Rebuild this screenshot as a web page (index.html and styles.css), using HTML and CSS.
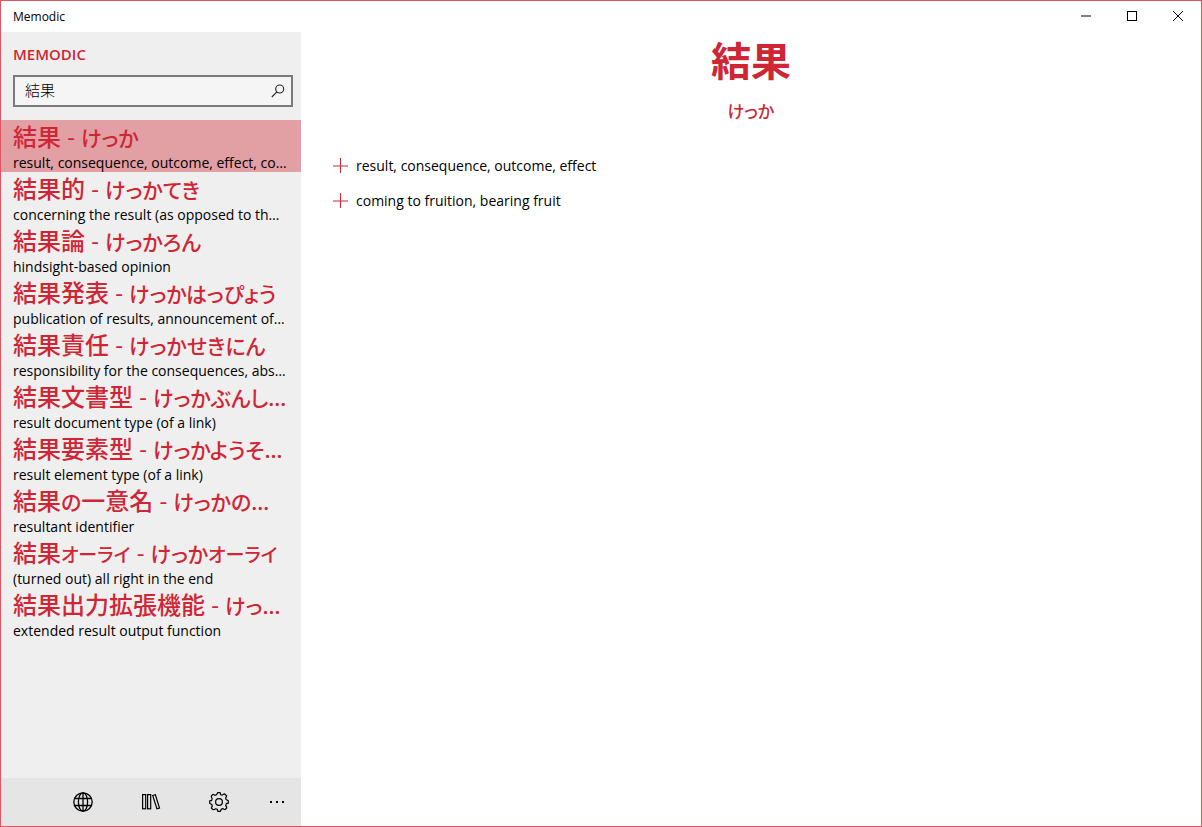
FILE: index.html
```html
<!DOCTYPE html>
<html lang="en">
<head>
<meta charset="utf-8">
<meta name="viewport" content="width=device-width, initial-scale=1">
<title>Memodic</title>
<link rel="stylesheet" href="styles.css">
</head>
<body>
<div class="window">
  <header class="titlebar">
    <span class="titlebar-name">Memodic</span>
    <div class="caption-buttons">
      <button type="button" class="caption-button" aria-label="Minimize"><svg width="10" height="10" viewBox="0 0 10 10"><path d="M0 5H10" stroke="#000" stroke-width="1" fill="none"/></svg></button>
      <button type="button" class="caption-button" aria-label="Maximize"><svg width="10" height="10" viewBox="0 0 10 10"><rect x=".5" y=".5" width="9" height="9" stroke="#000" fill="none"/></svg></button>
      <button type="button" class="caption-button" aria-label="Close"><svg width="10" height="10" viewBox="0 0 10 10"><path d="M0 0L10 10M10 0L0 10" stroke="#000" fill="none"/></svg></button>
    </div>
  </header>
  <div class="body">
    <aside class="sidebar">
      <h2 class="brand">MEMODIC</h2>
      <form class="search">
        <input class="search-input" type="text" value="結果" aria-label="Search">
        <button type="button" class="search-button" aria-label="Submit search"><svg width="14" height="14" viewBox="0 0 14 14" fill="none" stroke="#222" stroke-width="1.1"><circle cx="8.7" cy="5" r="4"/><path d="M5.9 7.9L.8 13"/></svg></button>
      </form>
      <ul class="results">
        <li><a href="#" class="result result-selected"><span class="word" lang="ja">結果 - <span class="hiragana">けっか</span></span><span class="gloss">result, consequence, outcome, effect, co…</span></a></li>
        <li><a href="#" class="result"><span class="word" lang="ja">結果的 - <span class="hiragana">けっかてき</span></span><span class="gloss">concerning the result (as opposed to th…</span></a></li>
        <li><a href="#" class="result"><span class="word" lang="ja">結果論 - <span class="hiragana">けっかろん</span></span><span class="gloss">hindsight-based opinion</span></a></li>
        <li><a href="#" class="result"><span class="word" lang="ja">結果発表 - <span class="hiragana">けっかはっぴょう</span></span><span class="gloss">publication of results, announcement of…</span></a></li>
        <li><a href="#" class="result"><span class="word" lang="ja">結果責任 - <span class="hiragana">けっかせきにん</span></span><span class="gloss">responsibility for the consequences, abs…</span></a></li>
        <li><a href="#" class="result"><span class="word" lang="ja">結果文書型 - <span class="hiragana">けっかぶんし</span><span class="more">…</span></span><span class="gloss">result document type (of a link)</span></a></li>
        <li><a href="#" class="result"><span class="word" lang="ja">結果要素型 - <span class="hiragana">けっかようそ</span><span class="more">…</span></span><span class="gloss">result element type (of a link)</span></a></li>
        <li><a href="#" class="result"><span class="word" lang="ja">結果<span class="hiragana">の</span>一意名 - <span class="hiragana">けっかの</span><span class="more">…</span></span><span class="gloss">resultant identifier</span></a></li>
        <li><a href="#" class="result"><span class="word" lang="ja">結果<span class="katakana">オーライ</span> - <span class="hiragana">けっか</span><span class="katakana">オーライ</span></span><span class="gloss">(turned out) all right in the end</span></a></li>
        <li><a href="#" class="result"><span class="word" lang="ja">結果出力拡張機能 - <span class="hiragana">けっ</span><span class="more">…</span></span><span class="gloss">extended result output function</span></a></li>
      </ul>
      <nav class="commands" aria-label="Commands">
        <button type="button" class="command" aria-label="Language"><svg width="20" height="20" viewBox="0 0 20 20" fill="none" stroke="#000" stroke-width="1.3"><circle cx="10" cy="10" r="9.2"/><ellipse cx="10" cy="10" rx="4.6" ry="9.2"/><path d="M10 .8V19.2M1.8 6.5H18.2M1.8 13.5H18.2"/></svg></button>
        <button type="button" class="command" aria-label="Library"><svg width="20" height="20" viewBox="0 0 20 20" fill="none" stroke="#000" stroke-width="1.2"><rect x="1.6" y="2.6" width="3.1" height="14.2"/><rect x="6.6" y="2.6" width="3.1" height="14.2"/><path d="M11.7 3.5L14.4 2.7L18.5 16L15.9 16.8Z"/></svg></button>
        <button type="button" class="command" aria-label="Settings"><svg width="20" height="20" viewBox="0 0 20 20" fill="none" stroke="#000" stroke-width="1.2" stroke-linejoin="round"><circle cx="10" cy="10" r="3.4"/><path d="M8.8.7H11.2L11.6 2.7Q13.6 3.5 14.3 2.3L15.6 1.9L17.7 4L16.7 5.9Q16.7 8 18.4 8.2L19.3 8.8V11.2L17.3 11.7Q16.2 13.6 17.5 14.6L17.7 16L16 17.7L14.1 16.7Q12 16.8 11.8 18.4L11.2 19.3H8.8L8.3 17.3Q6.4 16.2 5.4 17.5L4 17.7L2.3 16L3.3 14.1Q3.2 12 1.6 11.8L.7 11.2V8.8L2.7 8.3Q3.8 6.4 2.5 5.4L2.3 4L4 2.3L5.9 3.3Q8 3.2 8.2 1.6Z"/></svg></button>
        <button type="button" class="command command-more" aria-label="More"><svg width="16" height="4" viewBox="0 0 16 4"><path d="M1 1h2v2H1zM7 1h2v2H7zM13 1h2v2h-2z"/></svg></button>
      </nav>
    </aside>
    <main class="entry">
      <h1 class="entry-word" lang="ja">結果</h1>
      <p class="entry-reading" lang="ja">けっか</p>
      <ul class="meanings">
        <li class="meaning"><button type="button" class="add" aria-label="Add meaning 1"><svg width="15" height="15" viewBox="0 0 15 15"><path d="M7.5 0V15M0 8H15" stroke="#cf2635" fill="none"/></svg></button><span>result, consequence, outcome, effect</span></li>
        <li class="meaning"><button type="button" class="add" aria-label="Add meaning 2"><svg width="15" height="15" viewBox="0 0 15 15"><path d="M7.5 0V15M0 8H15" stroke="#cf2635" fill="none"/></svg></button><span>coming to fruition, bearing fruit</span></li>
      </ul>
    </main>
  </div>
</div>
</body>
</html>
```
FILE: styles.css
```css
* { box-sizing: border-box; }
body {
  margin: 0;
  background: #fff;
  color: #000;
  font-family: "Open Sans", "Noto Sans CJK JP", sans-serif;
  font-size: 14px;
}
button {
  padding: 0;
  border: 0;
  background: none;
  display: flex;
  align-items: center;
  justify-content: center;
}
svg { display: block; }
ul { list-style: none; margin: 0; padding: 0; }

.window {
  min-height: 100vh;
  display: flex;
  flex-direction: column;
  border: 1px solid #dd5661;
}
.titlebar {
  display: flex;
  justify-content: space-between;
  height: 31px;
  padding-left: 12px;
}
.titlebar-name { font-size: 12px; line-height: 31px; }
.caption-buttons { display: flex; }
.caption-button { width: 46px; height: 30px; }

.body { flex: 1; display: flex; }
.sidebar {
  flex: 0 0 300px;
  min-width: 0;
  display: flex;
  flex-direction: column;
  background: #efefef;
}
.brand {
  margin: 12px 12px 11px;
  color: #cf2635;
  font-size: 15px;
  font-weight: 600;
  line-height: 20px;
}
.search {
  display: flex;
  height: 32px;
  margin: 0 8px 13px 12px;
  border: 2px solid #7a7a7a;
  background: #f5f5f5;
}
.search-input {
  flex: 1;
  min-width: 0;
  padding: 0 0 3px 10px;
  border: 0;
  outline: 0;
  background: none;
  color: #000;
  font-family: "Noto Sans CJK JP", sans-serif;
  font-size: 15px;
  font-weight: 300;
}
.search-button { width: 27px; }

.results { flex: 1; }
.result {
  display: block;
  height: 52px;
  padding: 0 12px;
  color: #000;
  text-decoration: none;
  white-space: nowrap;
}
.result-selected { background: #e29fa4; }
.word {
  display: block;
  height: 34px;
  color: #cf2635;
  font-family: "Open Sans", "Noto Sans CJK JP", sans-serif;
  font-size: 24px;
  font-weight: 500;
  line-height: 34px;
}
.hiragana { font-size: 21px; font-feature-settings: "palt"; }
.katakana { font-size: 19px; font-feature-settings: "palt"; }
.more { font-size: 22px; font-weight: 600; }
.gloss { display: block; line-height: 18px; }

.commands {
  display: flex;
  justify-content: flex-end;
  height: 48px;
  background: #e5e5e5;
}
.command { width: 68px; }
.command-more { width: 48px; }

.entry { flex: 1; min-width: 0; padding: 0 32px; }
.entry-word, .entry-reading {
  margin: 0;
  color: #cf2635;
  font-family: "Noto Sans CJK JP", sans-serif;
  text-align: center;
}
.entry-word { font-size: 40px; font-weight: 600; line-height: 54px; }
.entry-reading {
  margin-top: 4px;
  font-size: 17px;
  font-weight: 500;
  line-height: 42px;
  font-feature-settings: "palt";
}
.meanings { margin-top: 16px; }
.meaning { display: flex; align-items: center; gap: 8px; height: 35px; }
```
